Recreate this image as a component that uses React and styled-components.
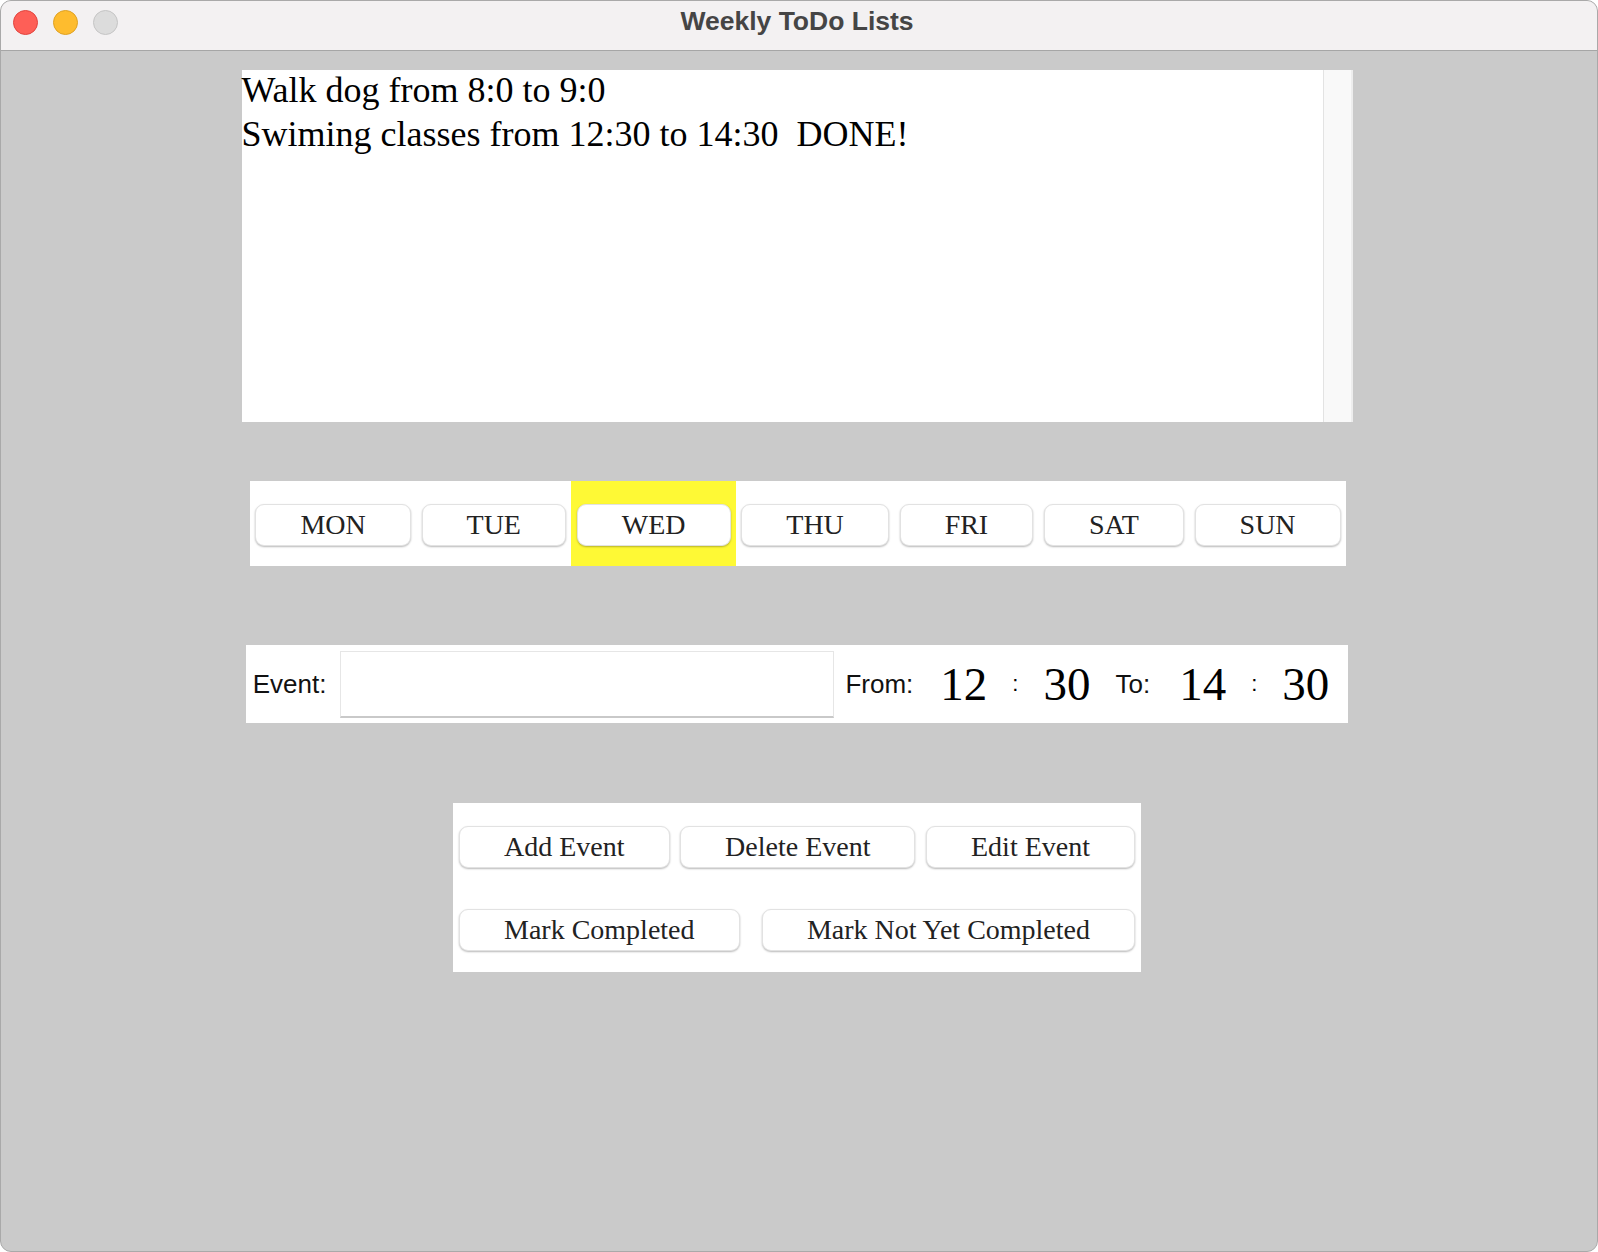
import React, { useState } from 'react';
import styled, { createGlobalStyle } from 'styled-components';

const GlobalStyle = createGlobalStyle`
  html, body {
    margin: 0;
    padding: 0;
    background: #ffffff;
  }
  * {
    box-sizing: border-box;
  }
`;

const days = ['MON', 'TUE', 'WED', 'THU', 'FRI', 'SAT', 'SUN'];

const events = [
  'Walk dog from 8:0 to 9:0',
  'Swiming classes from 12:30 to 14:30  DONE!',
];

export default function App() {
  const [selected, setSelected] = useState('WED');

  return (
    <>
      <GlobalStyle />
      <Window>
        <TitleBar>
          <Lights>
            <Light color="#fe5f57" border="#e0443e" />
            <Light color="#febc2e" border="#dea123" />
            <Light color="#dcdcdc" border="#c4c4c4" />
          </Lights>
          <Title>Weekly ToDo Lists</Title>
        </TitleBar>

        <Content>
          <ListBox>
            <ListText>
              {events.map(e => (
                <ListLine key={e}>{e}</ListLine>
              ))}
            </ListText>
            <ScrollTrack />
          </ListBox>

          <DayBar>
            {days.map(d => (
              <DayCell key={d} active={d === selected}>
                <Button onClick={() => setSelected(d)}>{d}</Button>
              </DayCell>
            ))}
          </DayBar>

          <EventRow>
            <Label>Event:</Label>
            <EventInput type="text" />
            <Label className="from">From:</Label>
            <TimeGroup>
              <TimeValue>12</TimeValue>
              <Colon>:</Colon>
              <TimeValue>30</TimeValue>
              <Label className="to">To:</Label>
              <TimeValue>14</TimeValue>
              <Colon>:</Colon>
              <TimeValue>30</TimeValue>
            </TimeGroup>
          </EventRow>

          <ActionPanel>
            <ActionRow>
              <Button>Add Event</Button>
              <Button>Delete Event</Button>
              <Button>Edit Event</Button>
            </ActionRow>
            <ActionRow>
              <Button>Mark Completed</Button>
              <Button>Mark Not Yet Completed</Button>
            </ActionRow>
          </ActionPanel>
        </Content>
      </Window>
    </>
  );
}

const Window = styled.div`
  width: 1598px;
  height: 1252px;
  display: flex;
  flex-direction: column;
  border: 1px solid #a9a9a9;
  border-radius: 11px;
  overflow: hidden;
  background: #cacaca;
`;

const TitleBar = styled.div`
  height: 50px;
  flex: none;
  display: flex;
  align-items: flex-start;
  position: relative;
  background: #f3f1f2;
  border-bottom: 1px solid #a6a6a6;
`;

const Lights = styled.div`
  display: flex;
  gap: 15px;
  padding: 9px 0 0 12px;
`;

const Light = styled.span`
  width: 25px;
  height: 25px;
  border-radius: 50%;
  background: ${p => p.color};
  border: 1px solid ${p => p.border};
`;

const Title = styled.div`
  position: absolute;
  left: 0;
  right: 4px;
  top: 5px;
  text-align: center;
  font-family: 'Liberation Sans', Arial, sans-serif;
  font-weight: bold;
  font-size: 26.5px;
  color: #454545;
  pointer-events: none;
`;

const Content = styled.div`
  flex: 1;
  display: flex;
  flex-direction: column;
  align-items: center;
  padding: 19px 4px 0 0;
`;

const ListBox = styled.div`
  width: 1111px;
  height: 352px;
  display: flex;
  background: #ffffff;
`;

const ListText = styled.div`
  flex: 1;
  margin-top: -2px;
  font-family: 'Liberation Serif', 'Times New Roman', serif;
  font-size: 36px;
  line-height: 44px;
  color: #000;
`;

const ListLine = styled.div`
  white-space: pre;
`;

const ScrollTrack = styled.div`
  width: 30px;
  background: #f9f9f9;
  border-left: 1px solid #e3e3e3;
  border-right: 2px solid #ededed;
`;

const DayBar = styled.div`
  display: flex;
  height: 85px;
  margin-top: 59px;
  margin-left: 2px;
  background: #ffffff;
`;

const DayCell = styled.div`
  display: flex;
  align-items: center;
  padding: 3px 5.4px 0;
  background: ${p => (p.active ? '#fef935' : 'transparent')};
`;

const Button = styled.button`
  height: 42px;
  padding: 0 44px;
  font-family: 'Liberation Serif', 'Times New Roman', serif;
  font-size: 28px;
  color: #222222;
  background: #ffffff;
  border: 1px solid #e2e2e2;
  border-radius: 9px;
  box-shadow: 0 1px 2px rgba(0, 0, 0, 0.28);
  white-space: nowrap;
  cursor: pointer;
`;

const EventRow = styled.div`
  display: flex;
  align-items: center;
  height: 78px;
  margin-top: 79px;
  padding: 0 19px 0 7px;
  background: #ffffff;

  .from {
    margin-left: 11px;
    margin-right: 27px;
  }

  .to {
    margin-right: 4px;
  }
`;

const Label = styled.span`
  font-family: 'Liberation Sans', Arial, sans-serif;
  font-size: 26px;
  color: #111;
`;

const EventInput = styled.input`
  width: 494px;
  height: 67px;
  margin-left: 14px;
  border: 1px solid #e6e6e6;
  border-bottom: 2px solid #c9c9c9;
  outline: none;
  font-size: 24px;
  background: #fff;
`;

const TimeGroup = styled.div`
  display: flex;
  align-items: center;
  gap: 25px;
`;

const TimeValue = styled.span`
  font-family: 'Liberation Serif', 'Times New Roman', serif;
  font-size: 47px;
  color: #000;
`;

const Colon = styled.span`
  font-family: 'Liberation Sans', Arial, sans-serif;
  font-size: 22px;
  color: #000;
`;

const ActionPanel = styled.div`
  width: 688px;
  margin-top: 80px;
  padding: 23px 6px 21px;
  display: flex;
  flex-direction: column;
  gap: 41px;
  background: #ffffff;
`;

const ActionRow = styled.div`
  display: flex;
  justify-content: space-between;
`;
